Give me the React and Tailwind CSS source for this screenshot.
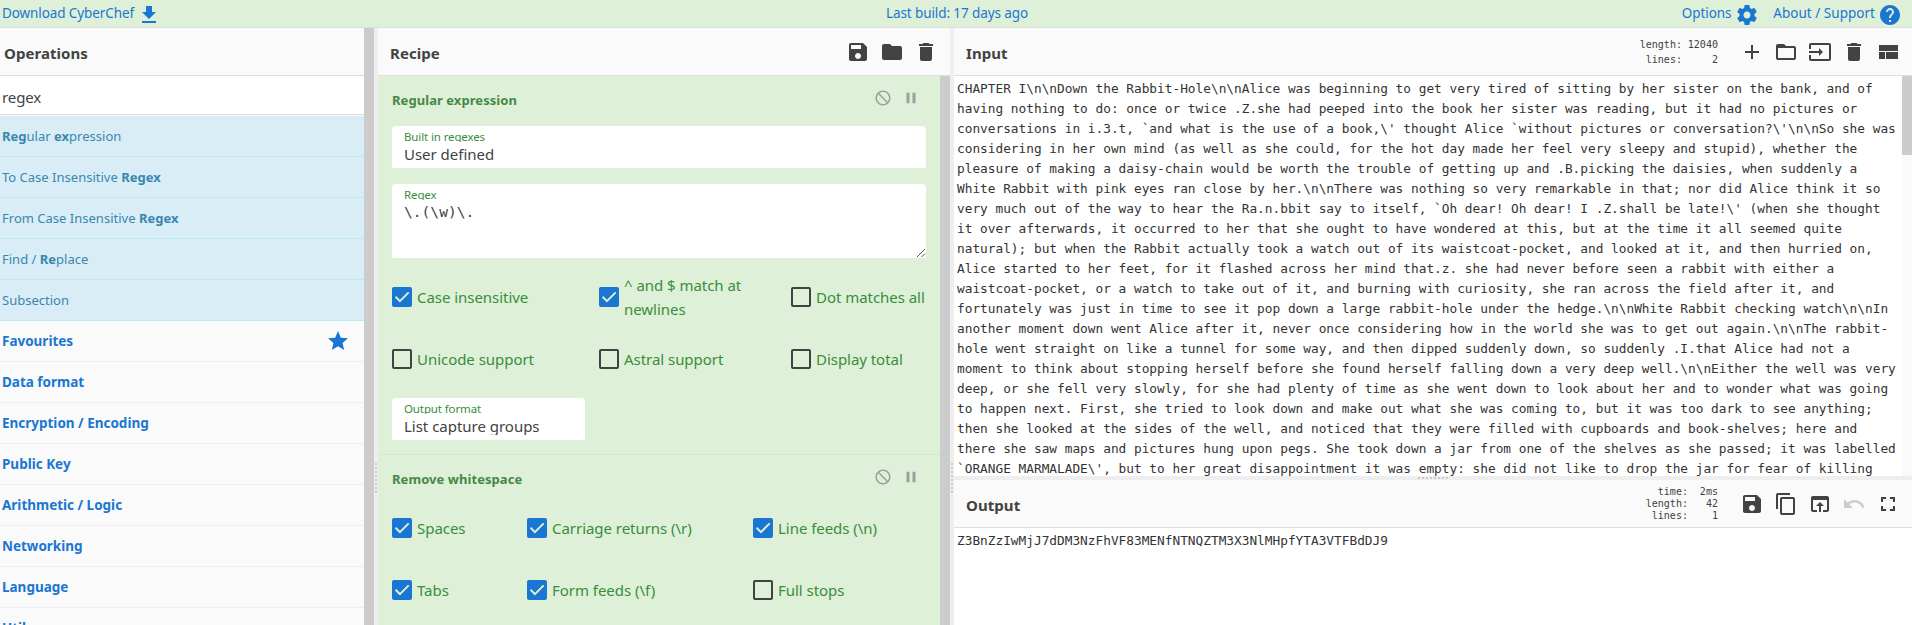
const ICONS = {
  download: "M19 9h-4V3H9v6H5l7 7 7-7zM5 18v2h14v-2H5z",
  settings:
    "M19.43 12.98c.04-.32.07-.64.07-.98s-.03-.66-.07-.98l2.11-1.65c.19-.15.24-.42.12-.64l-2-3.46c-.12-.22-.39-.3-.61-.22l-2.49 1c-.52-.4-1.08-.73-1.69-.98l-.38-2.65C14.46 2.18 14.25 2 14 2h-4c-.25 0-.46.18-.49.42l-.38 2.65c-.61.25-1.17.59-1.69.98l-2.49-1c-.23-.09-.49 0-.61.22l-2 3.46c-.13.22-.07.49.12.64l2.11 1.65c-.04.32-.07.65-.07.98s.03.66.07.98l-2.11 1.65c-.19.15-.24.42-.12.64l2 3.46c.12.22.39.3.61.22l2.49-1c.52.4 1.08.73 1.69.98l.38 2.65c.03.24.24.42.49.42h4c.25 0 .46-.18.49-.42l.38-2.65c.61-.25 1.17-.59 1.69-.98l2.49 1c.23.09.49 0 .61-.22l2-3.46c.12-.22.07-.49-.12-.64l-2.11-1.65zM12 15.5c-1.93 0-3.5-1.57-3.5-3.5s1.57-3.5 3.5-3.5 3.5 1.57 3.5 3.5-1.57 3.5-3.5 3.5z",
  help: "M12 2C6.48 2 2 6.48 2 12s4.48 10 10 10 10-4.48 10-10S17.52 2 12 2zm1 17h-2v-2h2v2zm2.07-7.75l-.9.92C13.45 12.9 13 13.5 13 15h-2v-.5c0-1.1.45-2.1 1.17-2.83l1.24-1.26c.37-.36.59-.86.59-1.41 0-1.1-.9-2-2-2s-2 .9-2 2H8c0-2.21 1.79-4 4-4s4 1.79 4 4c0 .88-.36 1.68-.93 2.25z",
  star: "M12 17.27L18.18 21l-1.64-7.03L22 9.24l-7.19-.61L12 2 9.19 8.63 2 9.24l5.46 4.73L5.82 21z",
  save: "M17 3H5c-1.11 0-2 .9-2 2v14c0 1.1.89 2 2 2h14c1.1 0 2-.9 2-2V7l-4-4zm-5 16c-1.66 0-3-1.34-3-3s1.34-3 3-3 3 1.34 3 3-1.34 3-3 3zm3-10H5V5h10v4z",
  folder: "M10 4H4c-1.1 0-1.99.9-1.99 2L2 18c0 1.1.9 2 2 2h16c1.1 0 2-.9 2-2V8c0-1.1-.9-2-2-2h-8l-2-2z",
  trash: "M6 19c0 1.1.9 2 2 2h8c1.1 0 2-.9 2-2V7H6v12zM19 4h-3.5l-1-1h-5l-1 1H5v2h14V4z",
  ban: "M12 2C6.48 2 2 6.48 2 12s4.48 10 10 10 10-4.48 10-10S17.52 2 12 2zm0 18c-4.42 0-8-3.58-8-8 0-1.85.63-3.55 1.69-4.9L16.9 18.31C15.55 19.37 13.85 20 12 20zm6.31-3.1L7.1 5.69C8.45 4.63 10.15 4 12 4c4.42 0 8 3.58 8 8 0 1.85-.63 3.55-1.69 4.9z",
  pause: "M6 19h4V5H6v14zm8-14v14h4V5h-4z",
  plus: "M19 13h-6v6h-2v-6H5v-2h6V5h2v6h6v2z",
  folderOpen: "M20 6h-8l-2-2H4c-1.1 0-1.99.9-1.99 2L2 18c0 1.1.9 2 2 2h16c1.1 0 2-.9 2-2V8c0-1.1-.9-2-2-2zm0 12H4V8h16v10z",
  input: "M21 3.01H3c-1.1 0-2 .9-2 2V9h2V4.99h18v14.03H3V15H1v4.01c0 1.1.9 1.98 2 1.98h18c1.1 0 2-.88 2-1.98v-14c0-1.11-.9-2-2-2zM11 16l4-4-4-4v3H1v2h10v3z",
  layout: "M3 19h6v-7H3v7zm7 0h12v-7H10v7zM3 5v6h19V5H3z",
  copy: "M16 1H4c-1.1 0-2 .9-2 2v14h2V3h12V1zm3 4H8c-1.1 0-2 .9-2 2v14c0 1.1.9 2 2 2h11c1.1 0 2-.9 2-2V7c0-1.1-.9-2-2-2zm0 16H8V7h11v14z",
  replace: "M19 4H5c-1.11 0-2 .9-2 2v12c0 1.1.89 2 2 2h4v-2H5V8h14v10h-4v2h4c1.1 0 2-.9 2-2V6c0-1.1-.89-2-2-2zm-7 6l-4 4h3v6h2v-6h3l-4-4z",
  undo: "M12.5 8c-2.65 0-5.05.99-6.9 2.6L2 7v9h9l-3.62-3.62c1.39-1.16 3.16-1.88 5.12-1.88 3.54 0 6.55 2.31 7.6 5.5l2.37-.78C21.08 11.03 17.15 8 12.5 8z",
  fullscreen: "M7 14H5v5h5v-2H7v-3zm-2-4h2V7h3V5H5v5zm12 7h-3v2h5v-5h-2v3zM14 5v2h3v3h2V5h-5z",
};

const INPUT_LINES = [
  "CHAPTER I\\n\\nDown the Rabbit-Hole\\n\\nAlice was beginning to get very tired of sitting by her sister on the bank, and of",
  "having nothing to do: once or twice .Z.she had peeped into the book her sister was reading, but it had no pictures or",
  "conversations in i.3.t, `and what is the use of a book,\\' thought Alice `without pictures or conversation?\\'\\n\\nSo she was",
  "considering in her own mind (as well as she could, for the hot day made her feel very sleepy and stupid), whether the",
  "pleasure of making a daisy-chain would be worth the trouble of getting up and .B.picking the daisies, when suddenly a",
  "White Rabbit with pink eyes ran close by her.\\n\\nThere was nothing so very remarkable in that; nor did Alice think it so",
  "very much out of the way to hear the Ra.n.bbit say to itself, `Oh dear! Oh dear! I .Z.shall be late!\\' (when she thought",
  "it over afterwards, it occurred to her that she ought to have wondered at this, but at the time it all seemed quite",
  "natural); but when the Rabbit actually took a watch out of its waistcoat-pocket, and looked at it, and then hurried on,",
  "Alice started to her feet, for it flashed across her mind that.z. she had never before seen a rabbit with either a",
  "waistcoat-pocket, or a watch to take out of it, and burning with curiosity, she ran across the field after it, and",
  "fortunately was just in time to see it pop down a large rabbit-hole under the hedge.\\n\\nWhite Rabbit checking watch\\n\\nIn",
  "another moment down went Alice after it, never once considering how in the world she was to get out again.\\n\\nThe rabbit-",
  "hole went straight on like a tunnel for some way, and then dipped suddenly down, so suddenly .I.that Alice had not a",
  "moment to think about stopping herself before she found herself falling down a very deep well.\\n\\nEither the well was very",
  "deep, or she fell very slowly, for she had plenty of time as she went down to look about her and to wonder what was going",
  "to happen next. First, she tried to look down and make out what she was coming to, but it was too dark to see anything;",
  "then she looked at the sides of the well, and noticed that they were filled with cupboards and book-shelves; here and",
  "there she saw maps and pictures hung upon pegs. She took down a jar from one of the shelves as she passed; it was labelled",
  "`ORANGE MARMALADE\\', but to her great disappointment it was empty: she did not like to drop the jar for fear of killing",
];

const CATEGORIES = ["Data format", "Encryption / Encoding", "Public Key", "Arithmetic / Logic", "Networking", "Language", "Utils"];

function Icon({ name, className = "size-6" }) {
  return (
    <svg viewBox="0 0 24 24" fill="currentColor" className={`block shrink-0 ${className}`}>
      <path d={ICONS[name]} />
    </svg>
  );
}

function Title({ children, className = "" }) {
  return <h2 className={`text-[15px] leading-6 font-bold tracking-[0.06px] text-[#424242] ${className}`}>{children}</h2>;
}

function Result({ children }) {
  return (
    <li className="h-[41px] border-b border-[#bce8f1] bg-[#d9edf7] pl-[2px] text-[13px] leading-10 tracking-[0.01px] text-[#3a87ad]">
      {children}
    </li>
  );
}

function Category({ children, icon }) {
  return (
    <li className="flex h-[41px] shrink-0 items-center justify-between border-b border-[#eee] pr-[14px] pl-[2px] text-[13.5px] font-bold tracking-[-0.01px] text-[#1976d2]">
      <span>{children}</span>
      {icon}
    </li>
  );
}

function Operations() {
  return (
    <section className="flex w-[374px] shrink-0">
      <div className="flex w-[364px] flex-col overflow-hidden">
        <div className="h-12 shrink-0 border-b border-[#ddd] pt-[13px] pl-1">
          <Title>Operations</Title>
        </div>
        <div className="mb-px h-[39px] shrink-0 border-b border-[#ddd] bg-white pt-[9px] pl-[2px] text-[15px] leading-6 tracking-[-0.1px] text-[#424242]">
          regex
        </div>
        <ul className="shrink-0">
          <Result><b>Reg</b>ular <b>ex</b>pression</Result>
          <Result>To Case Insensitive <b>Regex</b></Result>
          <Result>From Case Insensitive <b>Regex</b></Result>
          <Result>Find / <b>Re</b>place</Result>
          <Result>Subsection</Result>
        </ul>
        <ul className="flex flex-col">
          <Category icon={<Icon name="star" />}>Favourites</Category>
          {CATEGORIES.map((c) => (
            <Category key={c}>{c}</Category>
          ))}
        </ul>
      </div>
      <div className="w-[10px] bg-[#ccc]" />
    </section>
  );
}

function Dots({ vertical }) {
  return (
    <div className={vertical ? "flex flex-col gap-[2px]" : "flex gap-[2px]"}>
      {[0, 1, 2, 3, 4, 5, 6, 7].map((i) => (
        <i key={i} className="size-[2px] bg-[#ccc]" />
      ))}
    </div>
  );
}

function VGutter() {
  return (
    <div className="flex w-1 shrink-0 justify-center bg-[#eee] pt-[435px]">
      <Dots vertical />
    </div>
  );
}

function Check({ on, children }) {
  return (
    <label className="flex h-12 items-center text-[15px] leading-6 tracking-[-0.04px] text-[#388e3c]">
      {on ? (
        <span className="size-5 shrink-0 rounded-[2px] bg-[#1976d2]">
          <svg viewBox="0 0 20 20" className="block size-5" fill="none" stroke="#dff0d8" strokeWidth="2">
            <path d="M3.6 9.8 7.9 14.1 16.7 5.4" />
          </svg>
        </span>
      ) : (
        <span className="size-5 shrink-0 rounded-[2px] border-2 border-[#424242]" />
      )}
      <span className="ml-[5px]">{children}</span>
    </label>
  );
}

function IngredientHead({ children }) {
  return (
    <div className="flex h-[50px] justify-between pr-[6px]">
      <h3 className="pt-[14px] text-[13px] leading-5 font-bold tracking-[0.06px] text-[#468847]">{children}</h3>
      <div className="flex gap-[10px] pt-[13px] text-[#9e9e9e]">
        <Icon name="ban" className="size-[18px]" />
        <Icon name="pause" className="size-[18px]" />
      </div>
    </div>
  );
}

function FieldLabel({ children }) {
  return (
    <div className="h-4 overflow-hidden text-[11.5px] leading-[22px] tracking-[-0.12px] text-[#388e3c]">
      {children}
    </div>
  );
}

function SelectField({ label, value, className = "" }) {
  return (
    <div className={`h-[42px] rounded-t-[4px] bg-white pl-[12px] ${className}`}>
      <FieldLabel>{label}</FieldLabel>
      <div className="h-[21px] overflow-hidden text-[15px] leading-6 tracking-[-0.02px] text-[#424242]">{value}</div>
    </div>
  );
}

function Recipe() {
  return (
    <section className="flex w-[572px] shrink-0 flex-col overflow-hidden">
      <div className="flex h-12 shrink-0 justify-between border-b border-[#ddd] pr-[12px] pl-3">
        <Title className="pt-[13px]">Recipe</Title>
        <div className="flex gap-[10px] pt-3 text-[#424242]">
          <Icon name="save" />
          <Icon name="folder" />
          <Icon name="trash" />
        </div>
      </div>
      <div className="flex min-h-0 flex-1">
        <div className="w-[562px] overflow-hidden bg-[#dff0d8]">
          <div className="h-[379px] border-b border-[#d6e9c6] pr-[14px] pl-[14px]">
            <IngredientHead>Regular expression</IngredientHead>
            <SelectField label="Built in regexes" value="User defined" />
            <div className="mt-4 flex h-[74px] justify-between rounded-t-[4px] bg-white pl-[12px]">
              <div>
                <FieldLabel>Regex</FieldLabel>
                <div className="font-['DejaVu_Sans_Mono',monospace] text-[14.6px] leading-6 text-[#424242]">\.(\w)\.</div>
              </div>
              <svg viewBox="0 0 10 10" className="size-[10px] self-end" stroke="#555" strokeWidth="1" fill="none">
                <path d="M1 9 9 1M5.5 9 9 5.5" />
              </svg>
            </div>
            <div className="mt-[15px] grid grid-cols-[207px_192px_1fr] gap-y-[14px]">
              <Check on>Case insensitive</Check>
              <Check on>
                ^ and $ match at
                <br />
                newlines
              </Check>
              <Check>Dot matches all</Check>
              <Check>Unicode support</Check>
              <Check>Astral support</Check>
              <Check>Display total</Check>
            </div>
            <SelectField label="Output format" value="List capture groups" className="mt-[15px] w-[193px]" />
          </div>
          <div className="pr-[14px] pl-[14px]">
            <IngredientHead>Remove whitespace</IngredientHead>
            <div className="-mt-px grid grid-cols-[135px_226px_1fr] gap-y-[14px]">
              <Check on>Spaces</Check>
              <Check on>Carriage returns (\r)</Check>
              <Check on>Line feeds (\n)</Check>
              <Check on>Tabs</Check>
              <Check on>Form feeds (\f)</Check>
              <Check>Full stops</Check>
            </div>
          </div>
        </div>
        <div className="w-[10px] bg-[#ccc]" />
      </div>
    </section>
  );
}

function Stats({ rows, className }) {
  return (
    <div className={`grid text-right font-['DejaVu_Sans_Mono',monospace] text-[10.05px] whitespace-pre text-[#424242] ${className}`}>
      {rows.map(([k, v]) => (
        <div key={k} className="contents">
          <span>{k}:</span>
          <span>{v}</span>
        </div>
      ))}
    </div>
  );
}

const MONO = "font-['DejaVu_Sans_Mono',monospace] text-[12.79px] leading-5 whitespace-pre text-[#333]";

function InputOutput() {
  return (
    <section className="flex min-w-0 flex-1 flex-col">
      <div className="flex h-12 shrink-0 border-b border-[#ddd] pr-[12px] pl-3">
        <Title className="flex-1 pt-[13px]">Input</Title>
        <Stats
          className="mt-[9px] grid-cols-[auto_36px] content-start leading-[15px]"
          rows={[["length", "12040"], ["lines", "2"]]}
        />
        <div className="ml-[22px] flex gap-[10px] pt-3 text-[#424242]">
          <Icon name="plus" />
          <Icon name="folderOpen" />
          <Icon name="input" />
          <Icon name="trash" />
          <Icon name="layout" />
        </div>
      </div>
      <div className="flex h-[400px] shrink-0 overflow-hidden bg-white">
        <div className={`flex-1 pt-[3px] pl-[3px] ${MONO}`}>
          {INPUT_LINES.map((l) => (
            <div key={l} className="h-5 last:h-[17px]">{l}</div>
          ))}
        </div>
        <div className="w-[10px] bg-[#fafafa]">
          <div className="h-[79px] bg-[#ccc]" />
        </div>
      </div>
      <div className="flex h-1 shrink-0 items-center justify-center bg-[#eee]">
        <Dots />
      </div>
      <div className="flex h-12 shrink-0 border-b border-[#ddd] pr-[12px] pl-3">
        <Title className="flex-1 pt-[13px]">Output</Title>
        <Stats
          className="mt-[6px] grid-cols-[auto_30px] content-start leading-3"
          rows={[["time", "2ms"], ["length", "42"], ["lines", "1"]]}
        />
        <div className="ml-[22px] flex gap-[10px] pt-3 text-[#424242]">
          <Icon name="save" />
          <Icon name="copy" />
          <Icon name="replace" />
          <Icon name="undo" className="size-6 text-[#ccc]" />
          <Icon name="fullscreen" />
        </div>
      </div>
      <div className={`flex-1 bg-white pt-[3px] pl-[3px] ${MONO}`}>Z3BnZzIwMjJ7dDM3NzFhVF83MENfNTNQZTM3X3NlMHpfYTA3VTFBdDJ9</div>
    </section>
  );
}

export default function App() {
  return (
    <div className="flex h-[625px] w-[1912px] flex-col overflow-hidden bg-[#fafafa] font-['Noto_Sans','Open_Sans',sans-serif]">
      <header className="grid h-7 shrink-0 grid-cols-3 border-b border-[#ddd] bg-[#dff0d8] pr-[10px] pl-[2px] text-[13.5px] leading-[26px] tracking-[-0.1px] text-[#1976d2]">
        <div className="flex">
          <span className="w-[135px]">Download CyberChef</span>
          <Icon name="download" className="mt-[3px] size-6" />
        </div>
        <div className="pl-[10px] text-center">Last build: 17 days ago</div>
        <div className="flex justify-end">
          <span>Options</span>
          <Icon name="settings" className="mt-[3px] ml-1 size-6" />
          <span className="ml-[14px] tracking-[0.02px]">About / Support</span>
          <Icon name="help" className="mt-[3px] ml-[3px] size-6" />
        </div>
      </header>
      <main className="flex min-h-0 flex-1">
        <Operations />
        <VGutter />
        <Recipe />
        <VGutter />
        <InputOutput />
      </main>
    </div>
  );
}
